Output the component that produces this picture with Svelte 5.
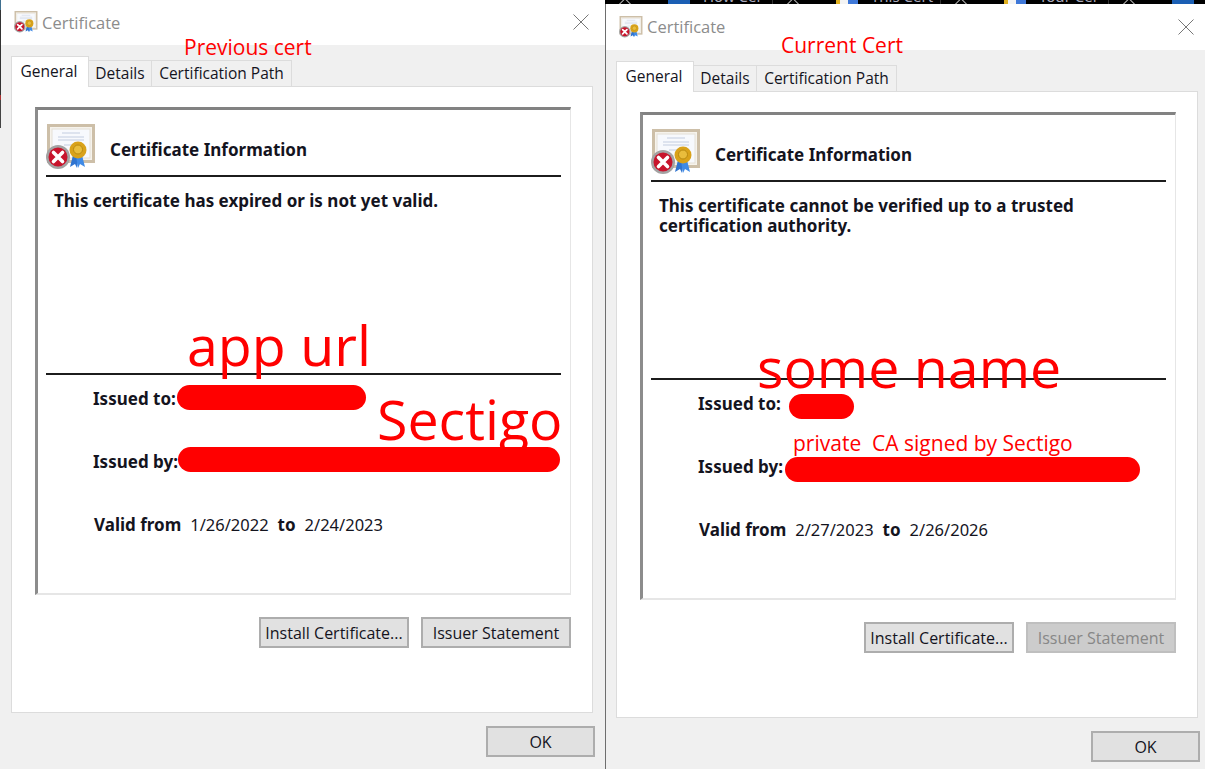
<script>
  const dialogs = [
    {
      id: 'previous',
      message: 'This certificate has expired or is not yet valid.',
      from: '1/26/2022',
      to: '2/24/2023',
      issuerDisabled: false,
      marks: [
        { x: 177, y: 385, w: 189, h: 25 },
        { x: 178, y: 447, w: 382, h: 25 }
      ],
      notes: [
        { text: 'Previous cert', x: 184, y: 35, size: 'small' },
        { text: 'app url', x: 187, y: 312, size: 'big' },
        { text: 'Sectigo', x: 377, y: 386, size: 'big' }
      ]
    },
    {
      id: 'current',
      message: 'This certificate cannot be verified up to a trusted certification authority.',
      from: '2/27/2023',
      to: '2/26/2026',
      issuerDisabled: true,
      marks: [
        { x: 183, y: 390, w: 65, h: 25 },
        { x: 179, y: 453, w: 355, h: 25 }
      ],
      notes: [
        { text: 'Current Cert', x: 175, y: 29, size: 'small' },
        { text: 'some name', x: 151, y: 330, size: 'big' },
        { text: 'private  CA signed by Sectigo', x: 187, y: 427, size: 'small' }
      ]
    }
  ]

  const taskTabs = [
    { title: 'How Cer', icon: 'blue' },
    { title: 'This Cert', icon: 'google' },
    { title: 'Tour Cer', icon: 'google' },
    { title: '', icon: 'blue' }
  ]
</script>

{#snippet certIcon(cls)}
  <svg class={cls} viewBox="0 0 50 46" aria-hidden="true">
    <rect x="2.5" y="1.5" width="45" height="36" fill="#f6f3ec" stroke="#cdbfa8" stroke-width="3" />
    <rect x="6" y="5" width="38" height="29" fill="#f7f9fd" stroke="#e4e0d6" />
    <path d="M16 9h18M12 13h26M12 16h26M18 21h14" stroke="#c3cde0" stroke-width="1" />
    <path d="M27 31l-3 12 5-3 2 4 2-12z" fill="#2f74d0" />
    <path d="M36 31l3 12-5-3-2 4-2-12z" fill="#3f8ae6" />
    <circle cx="32" cy="26" r="8.5" fill="#d9a21a" />
    <circle cx="32" cy="25.5" r="4.5" fill="#e9bd3c" stroke="#b98a10" />
    <circle cx="12" cy="33" r="12" fill="#a3a3a3" />
    <circle cx="12" cy="33" r="9.5" fill="#c8142c" />
    <path d="M7.5 28.5l9 9M16.5 28.5l-9 9" stroke="#fff" stroke-width="3.6" stroke-linecap="round" />
  </svg>
{/snippet}

<div class="desktop">
  <div class="edge"></div>

  <div class="taskbar">
    {#each taskTabs as tab}
      <div class="task">
        <span class="chevron"></span>
        <span class="task-icon {tab.icon}"></span>
        <span class="task-title">{tab.title}</span>
      </div>
    {/each}
  </div>

  {#each dialogs as dialog}
    <section class="win {dialog.id}">
      <header class="title">
        {@render certIcon('title-icon')}
        <span>Certificate</span>
        <svg class="close" viewBox="0 0 16 16" aria-hidden="true">
          <path d="M.5.5l15 15M15.5.5l-15 15" stroke="#777" fill="none" />
        </svg>
      </header>

      <div class="body">
        <nav class="tabs">
          <button class="tab active" type="button">General</button>
          <button class="tab" type="button">Details</button>
          <button class="tab" type="button">Certification Path</button>
        </nav>

        <div class="panel">
          <div class="info">
            <div class="info-head">
              {@render certIcon('big-icon')}
              <h2>Certificate Information</h2>
            </div>
            <p class="message">{dialog.message}</p>
            <div class="fields">
              <div class="label">Issued to:</div>
              <div class="label">Issued by:</div>
              <div class="validity">
                <b>Valid from</b>
                <span>{dialog.from}</span>
                <b>to</b>
                <span>{dialog.to}</span>
              </div>
            </div>
          </div>
          <div class="panel-actions">
            <button class="btn" type="button">Install Certificate...</button>
            <button class="btn" type="button" disabled={dialog.issuerDisabled}>Issuer Statement</button>
          </div>
        </div>

        <div class="footer">
          <button class="btn ok" type="button">OK</button>
        </div>
      </div>

      {#each dialog.marks as m}
        <div class="mark" style="left:{m.x}px;top:{m.y}px;width:{m.w}px;height:{m.h}px"></div>
      {/each}
      {#each dialog.notes as n}
        <div class="note {n.size}" style="left:{n.x}px;top:{n.y}px">{n.text}</div>
      {/each}
    </section>
  {/each}
</div>

<style>
  :global(body) {
    margin: 0;
  }

  .desktop {
    position: relative;
    width: 1205px;
    height: 769px;
    overflow: hidden;
    background: #f0f0f0;
    font-family: "Noto Sans", sans-serif;
    color: #14141e;
  }

  .edge {
    position: absolute;
    z-index: 3;
    left: 0;
    top: 0;
    width: 1px;
    height: 128px;
    background: linear-gradient(#3f6f8f 0 8%, #333 8% 74%, #a33 74% 78%, #444 78%);
  }

  .taskbar {
    position: absolute;
    left: 605px;
    top: 0;
    width: 600px;
    height: 4px;
    overflow: hidden;
    display: flex;
    background: #000;
  }

  .task {
    flex: 0 0 168px;
    display: flex;
    align-items: flex-start;
    padding-left: 15px;
    box-sizing: border-box;
    border-right: 1px solid #333;
  }

  .chevron {
    width: 10px;
    height: 10px;
    margin: 0 38px 0 0;
    border-left: 1px solid #bbb;
    border-top: 1px solid #bbb;
    transform: rotate(45deg);
    box-sizing: border-box;
  }

  .task-icon {
    flex: 0 0 22px;
    height: 5px;
    margin-right: 13px;
  }

  .task-icon.blue {
    background: #1b5fb4;
  }

  .task-icon.google {
    background: linear-gradient(90deg, #e0b020 0 20%, #f4f4f4 20% 55%, #3f78d8 55%);
  }

  .task-title {
    margin-top: -13px;
    color: #aab;
    font-size: 15px;
    line-height: 18px;
    white-space: nowrap;
  }

  .win {
    position: absolute;
    top: 0;
    left: 0;
    width: 605px;
    height: 769px;
    box-sizing: border-box;
    display: flex;
    flex-direction: column;
    background: #f0f0f0;
  }

  .win.current {
    left: 605px;
    top: 4px;
    height: 765px;
    border-left: 1px solid #6e6e6e;
  }

  .title {
    flex: 0 0 45px;
    display: flex;
    align-items: center;
    box-sizing: border-box;
    padding: 0 16px 1px 14px;
    background: #fff;
    color: #8c8c8c;
    font-family: "Open Sans", sans-serif;
    font-size: 16.5px;
  }

  .current .title {
    flex-basis: 46px;
    padding-left: 13px;
  }

  .title span {
    margin-left: 4px;
  }

  .title-icon {
    width: 24px;
    height: 22px;
  }

  .close {
    width: 16px;
    height: 16px;
    margin-left: auto;
  }

  .body {
    flex: 1;
    display: flex;
    flex-direction: column;
    padding: 0 12px 0 11px;
    min-height: 0;
  }

  .current .body {
    padding-left: 10px;
  }

  .tabs {
    display: flex;
    align-items: flex-end;
    height: 42px;
    margin-bottom: -1px;
    position: relative;
    z-index: 1;
  }

  button {
    font: inherit;
    color: inherit;
    margin: 0;
  }

  .tab {
    width: 63px;
    height: 27px;
    padding: 0 0 2px;
    box-sizing: border-box;
    border: 1px solid #dcdcdc;
    border-left: 0;
    background: #f0f0f0;
    font-family: "Open Sans", sans-serif;
    font-size: 15.5px;
    line-height: 24px;
  }

  .tab:nth-child(3) {
    width: 140px;
  }

  .tab.active {
    width: 78px;
    height: 31px;
    padding-right: 2px;
    border-left: 1px solid #dcdcdc;
    border-bottom: 0;
    background: #fff;
  }

  .panel {
    height: 627px;
    box-sizing: border-box;
    display: flex;
    flex-direction: column;
    padding: 20px 21px 0 23px;
    border: 1px solid #dcdcdc;
    background: #fff;
  }

  .info {
    height: 488px;
    box-sizing: border-box;
    padding: 0 9px 0 8px;
    border-style: solid;
    border-color: #828282 #e6e6e6 #e6e6e6 #8c8c8c;
    border-width: 3px 1px 2px 3px;
  }

  .info-head {
    height: 67px;
    box-sizing: border-box;
    display: flex;
    align-items: flex-start;
    border-bottom: 2px solid #1c1c1c;
  }

  .big-icon {
    width: 50px;
    height: 46px;
    margin-top: 14px;
  }

  h2 {
    margin: 29px 0 0 14px;
    font-size: 17px;
    font-weight: 700;
    line-height: 22px;
  }

  .message {
    height: 198px;
    box-sizing: border-box;
    margin: 0;
    padding: 14px 40px 0 8px;
    border-bottom: 2px solid #1c1c1c;
    font-size: 17px;
    font-weight: 700;
    line-height: 20px;
  }

  .fields {
    display: flex;
    flex-direction: column;
    gap: 43px;
    padding: 14px 0 0 47px;
    font-size: 16.5px;
    line-height: 20px;
  }

  .label,
  .validity b {
    font-size: 17px;
    font-weight: 700;
  }

  .validity {
    display: flex;
    gap: 9px;
    margin-left: 1px;
  }

  .panel-actions {
    display: flex;
    justify-content: flex-end;
    gap: 12px;
    margin-top: 22px;
  }

  .btn {
    width: 150px;
    height: 31px;
    padding: 0;
    box-sizing: border-box;
    border: 2px solid #adadad;
    background: #e1e1e1;
    font-family: "Open Sans", sans-serif;
    font-size: 16px;
    line-height: 24px;
  }

  .btn:disabled {
    border-color: #bfbfbf;
    background: #cccccc;
    color: #878787;
  }

  .footer {
    display: flex;
    justify-content: flex-end;
    margin: 13px -2px 0 0;
  }

  .btn.ok {
    width: 109px;
  }

  .mark {
    position: absolute;
    z-index: 2;
    border-radius: 13px;
    background: #ff0000;
  }

  .note {
    position: absolute;
    z-index: 2;
    color: #ff0000;
    font-family: "Open Sans", sans-serif;
    white-space: pre;
    line-height: 1.2;
  }

  .note.small {
    font-size: 21px;
  }

  .note.big {
    font-size: 55.5px;
  }
</style>
